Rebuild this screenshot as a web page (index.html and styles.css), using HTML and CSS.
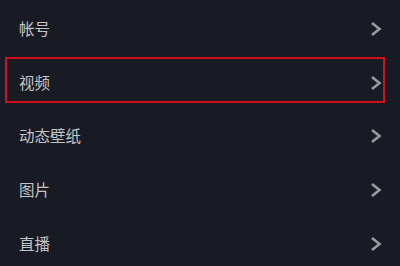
FILE: index.html
```html
<!DOCTYPE html>
<html lang="zh">
<head>
<meta charset="utf-8">
<link rel="stylesheet" href="styles.css">
</head>
<body>
<ul class="menu">
  <li class="row"><span class="label">帐号</span><svg class="chev" viewBox="0 0 12 16"><path d="M2 2 L9.5 8 L2 14"/></svg></li>
  <li class="row active"><span class="label">视频</span><svg class="chev" viewBox="0 0 12 16"><path d="M2 2 L9.5 8 L2 14"/></svg></li>
  <li class="row"><span class="label">动态壁纸</span><svg class="chev" viewBox="0 0 12 16"><path d="M2 2 L9.5 8 L2 14"/></svg></li>
  <li class="row"><span class="label">图片</span><svg class="chev" viewBox="0 0 12 16"><path d="M2 2 L9.5 8 L2 14"/></svg></li>
  <li class="row"><span class="label">直播</span><svg class="chev" viewBox="0 0 12 16"><path d="M2 2 L9.5 8 L2 14"/></svg></li>
</ul>
</body>
</html>
```
FILE: styles.css
```css
html, body {
  margin: 0;
  padding: 0;
  background: #181b23;
  width: 400px;
  height: 266px;
  overflow: hidden;
}
.menu {
  list-style: none;
  margin: 0;
  padding: 2px 0 0 0;
  font-family: "Noto Sans CJK SC", "Noto Sans", sans-serif;
}
.row {
  position: relative;
  height: 53.7px;
  display: flex;
  align-items: center;
  justify-content: space-between;
  padding: 0 18px 0 19px;
  box-sizing: border-box;
}
.label {
  color: #c4c4c6;
  font-size: 15.5px;
  line-height: 1;
}
.chev {
  width: 12px;
  height: 16px;
  fill: none;
  stroke: #9a9ba0;
  stroke-width: 2.6;
}
.active::after {
  content: "";
  position: absolute;
  left: 5px;
  right: 15px;
  top: 1px;
  bottom: 6px;
  border: 2.5px solid #cf111b;
}
```
